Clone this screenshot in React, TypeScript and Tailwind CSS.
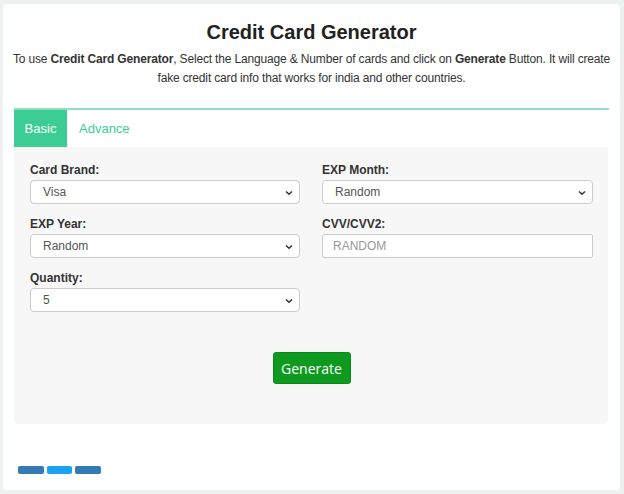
import React from "react";

const Chevron = () => (
  <svg width="8" height="6" viewBox="0 0 8 6" className="absolute right-[7px] top-[10px] pointer-events-none">
    <path d="M1 1.5 L4 4.3 L7 1.5" fill="none" stroke="#333" strokeWidth="1.5" />
  </svg>
);

function SelectField({ label, value }: { label: string; value: string }) {
  return (
    <div className="flex flex-col">
      <label className="text-[12px] font-bold text-[#333] leading-[14px] mb-[3px]">{label}</label>
      <div className="relative">
        <div className="h-[24px] w-full bg-white border border-[#ccc] rounded-[4px] text-[12px] text-[#555] pl-[12px] flex items-center">
          {value}
        </div>
        <Chevron />
      </div>
    </div>
  );
}

function InputField({ label, placeholder }: { label: string; placeholder: string }) {
  return (
    <div className="flex flex-col">
      <label className="text-[12px] font-bold text-[#333] leading-[14px] mb-[3px]">{label}</label>
      <div className="h-[24px] w-full bg-white border border-[#ccc] rounded-[2px] text-[12px] text-[#999] pl-[10px] flex items-center">
        {placeholder}
      </div>
    </div>
  );
}

export default function App() {
  return (
    <div
      className="w-[624px] h-[494px] bg-[#eef1f1] pt-[4px] pl-[3px] overflow-hidden"
      style={{ fontFamily: '"Liberation Sans", Arial, sans-serif' }}
    >
      <div className="w-[617px] h-[486px] bg-white rounded-[4px] pl-[11px] pr-[11px] flex flex-col">
        <h1 className="text-center text-[20px] font-bold text-[#222] leading-[24px] mt-[16px]">
          Credit Card Generator
        </h1>
        <p className="text-center text-[12px] text-[#333] leading-[19px] mt-[6px] -mx-[4px] tracking-[-0.16px]">
          <span className="whitespace-nowrap">
            To use <b>Credit Card Generator</b>, Select the Language &amp; Number of cards and click on <b>Generate</b> Button. It will create
          </span>
          <br />
          fake credit card info that works for india and other countries.
        </p>
        <div className="mt-[20px] border-t-[2px] border-t-[#8ee0c0] flex w-[595px]">
          <div className="w-[53px] h-[37px] bg-[#3ccd95] text-white text-[13px] flex items-center justify-center">
            Basic
          </div>
          <div className="h-[37px] text-[#3ccd95] text-[13px] flex items-center pl-[12px]">Advance</div>
        </div>
        <div className="w-[594px] h-[277px] bg-[#f7f7f7] rounded-b-[4px] pl-[16px] pr-[15px] pt-[16px] flex flex-col">
          <div className="grid grid-cols-[270px_271px] gap-x-[22px] gap-y-[13px]">
            <SelectField label="Card Brand:" value="Visa" />
            <SelectField label="EXP Month:" value="Random" />
            <SelectField label="EXP Year:" value="Random" />
            <InputField label="CVV/CVV2:" placeholder="RANDOM" />
            <SelectField label="Quantity:" value="5" />
          </div>
          <div className="flex justify-center mt-[40px]">
            <button
              className="w-[78px] h-[32px] bg-[#0d9a1f] border border-[#0a8a1a] rounded-[3px] text-white text-[14px]"
              style={{ fontFamily: '"Open Sans", sans-serif' }}
            >
              Generate
            </button>
          </div>
        </div>
        <div className="flex gap-[3px] mt-[42px] ml-[4px]">
          <div className="w-[26px] h-[8px] rounded-[2px] bg-[#337ab7]" />
          <div className="w-[25px] h-[8px] rounded-[2px] bg-[#1da1f2]" />
          <div className="w-[26px] h-[8px] rounded-[2px] bg-[#337ab7]" />
        </div>
      </div>
    </div>
  );
}
